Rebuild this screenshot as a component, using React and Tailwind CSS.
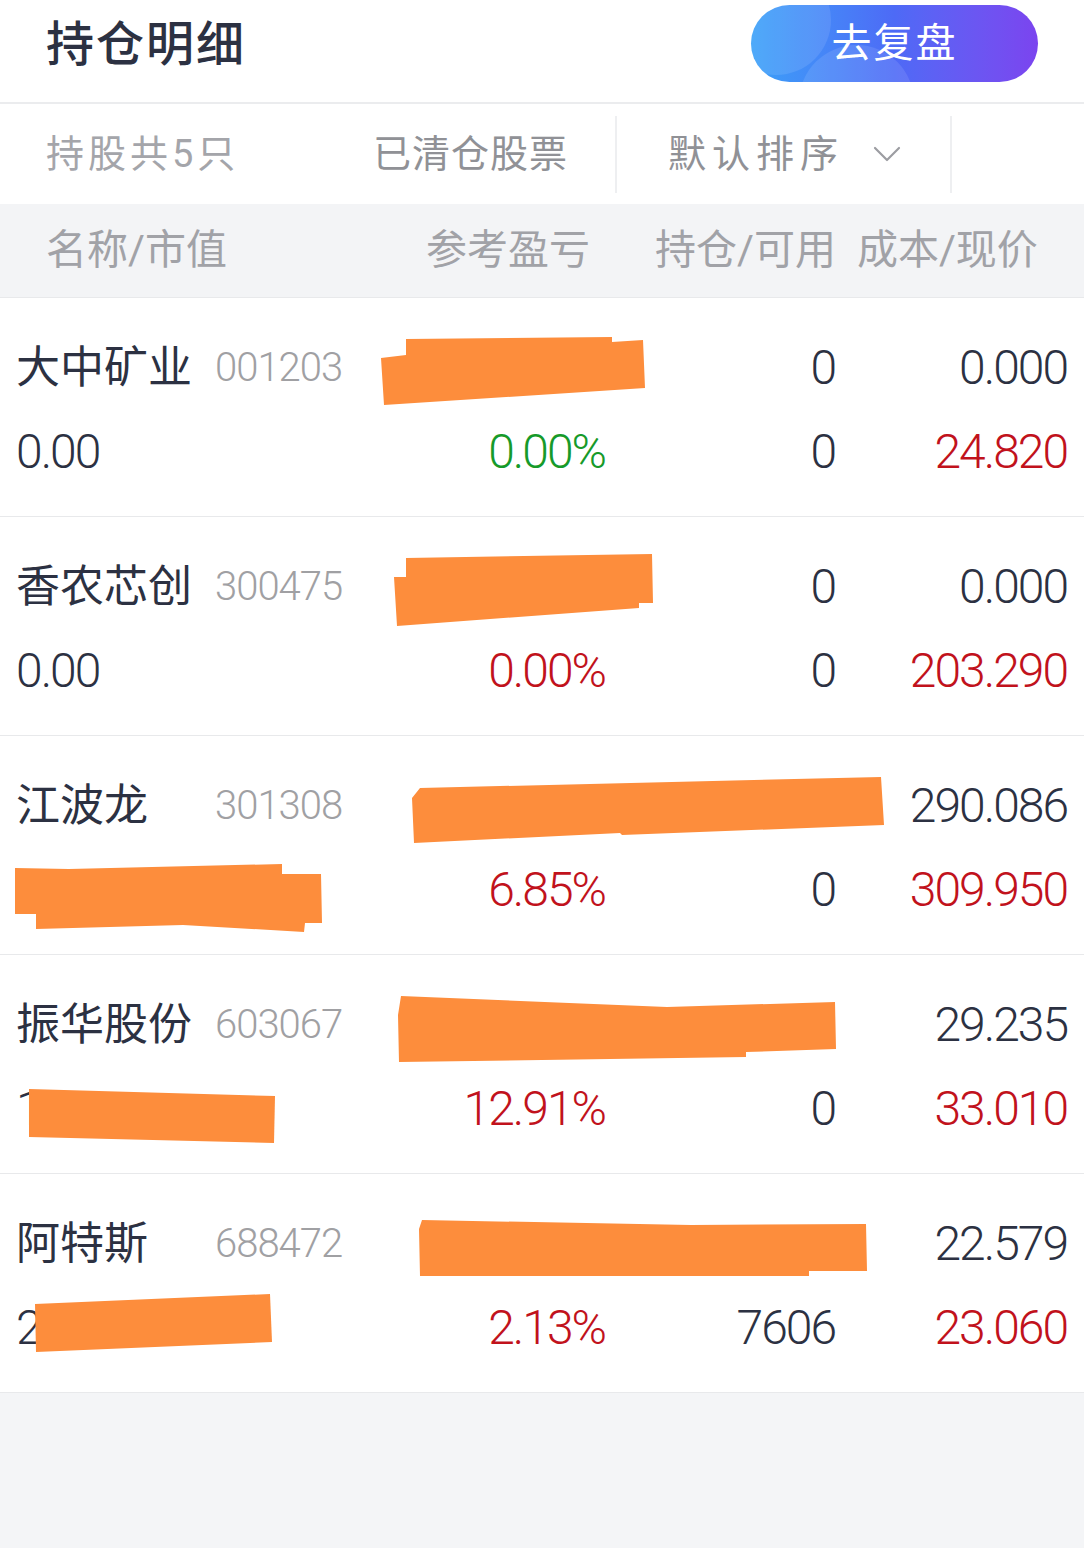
import React from 'react';

const FONT = { fontFamily: 'Roboto, "Noto Sans CJK SC", sans-serif' };

const RED = 'text-[#c1121c]';
const GREEN = 'text-[#169a2a]';
const DARK = 'text-[#2c3142]';

// 打码区域（相对每一行的坐标）
const rows = [
  {
    name: '大中矿业', code: '001203',
    r1: ['', '0', '0.000'], r1c: [DARK, DARK, DARK],
    value: '0.00', pct: '0.00%', pctColor: GREEN, avail: '0', price: '24.820',
    marks: ['381,60 406,57 406,41 612,39 612,44 643,42 645,90 384,107'],
  },
  {
    name: '香农芯创', code: '300475',
    r1: ['', '0', '0.000'], r1c: [DARK, DARK, DARK],
    value: '0.00', pct: '0.00%', pctColor: RED, avail: '0', price: '203.290',
    marks: ['394,60 406,60 406,41 652,37 653,86 639,86 639,91 397,109'],
  },
  {
    name: '江波龙', code: '301308',
    r1: ['', '', '290.086'], r1c: [RED, DARK, DARK],
    value: '', pct: '6.85%', pctColor: RED, avail: '0', price: '309.950',
    marks: [
      '412,62 420,52 881,41 884,89 622,99 620,97 414,107',
      '15,132 69,133 282,128 282,138 321,138 322,187 305,187 304,196 183,189 36,193 36,178 15,178',
    ],
  },
  {
    name: '振华股份', code: '603067',
    r1: ['', '', '29.235'], r1c: [DARK, DARK, DARK],
    value: '1', pct: '12.91%', pctColor: RED, avail: '0', price: '33.010',
    marks: [
      '401,41 667,52 835,47 836,94 746,97 746,102 399,107 398,60',
      '29,134 275,141 274,188 29,182',
    ],
  },
  {
    name: '阿特斯', code: '688472',
    r1: ['', '', '22.579'], r1c: [DARK, DARK, DARK],
    value: '2', pct: '2.13%', pctColor: RED, avail: '7606', price: '23.060',
    marks: [
      '422,46 691,51 866,50 867,97 809,97 809,102 420,102 419,55',
      '35,130 270,120 272,168 36,178',
    ],
  },
];

const Num = ({ children, className = '' }) => (
  <div className={`text-right text-[48px] font-light tracking-[-2px] leading-[84px] ${className}`}>{children}</div>
);

const Row = ({ row }) => (
  <div className="relative bg-white border-b border-[#e8e9eb] pt-[28px] pb-[22px] px-[16px] pr-[17px]">
    <div className="grid grid-cols-[344px_245px_230px_1fr]">
      <div className="flex items-center h-[84px]">
        <span className={`w-[199px] text-[44px] ${DARK}`}>{row.name}</span>
        <span className="text-[40px] font-light tracking-[-1px] text-[#a0a0a3]">{row.code}</span>
      </div>
      <Num className={row.r1c[0]}>{row.r1[0]}</Num>
      <Num className={row.r1c[1]}>{row.r1[1]}</Num>
      <Num className={row.r1c[2]}>{row.r1[2]}</Num>

      <div className={`text-[48px] font-light tracking-[-2px] leading-[84px] ${DARK}`}>{row.value}</div>
      <Num className={row.pctColor}>{row.pct}</Num>
      <Num className={DARK}>{row.avail}</Num>
      <Num className={RED}>{row.price}</Num>
    </div>
    <svg className="absolute inset-0 pointer-events-none" width="1084" height="219" viewBox="0 0 1084 219">
      {row.marks.map((p, i) => (
        <polygon key={i} points={p} fill="#fd8d3c" />
      ))}
    </svg>
  </div>
);

export default function App() {
  return (
    <div className="min-h-[1548px] bg-[#f4f5f7]" style={FONT}>
      {/* 标题栏 */}
      <div className="flex items-start justify-between h-[104px] pl-[46px] pr-[46px] bg-white border-b-2 border-[#ebecee]">
        <h1 className={`mt-[9px] leading-[72px] text-[48px] font-medium tracking-[2px] ${DARK}`}>持仓明细</h1>
        <button className="relative overflow-hidden mt-[5px] w-[287px] h-[77px] rounded-full bg-gradient-to-r from-[#3aa0f8] via-[#4d6af6] to-[#7b44ef]">
          <span className="absolute -left-[30px] -top-[40px] w-[110px] h-[110px] rounded-full bg-white/10" />
          <span className="absolute left-[48px] top-[40px] w-[115px] h-[115px] rounded-full bg-white/10" />
          <span className="relative text-[40px] tracking-[2px] text-white">去复盘</span>
        </button>
      </div>

      {/* 筛选栏 */}
      <div className="flex items-center h-[100px] bg-white">
        <div className="w-[373px] pl-[46px] text-[38px] tracking-[4px] text-[#a4a5aa]">持股共5只</div>
        <div className="w-[242px] text-[38px] tracking-[1px] text-[#909196]">已清仓股票</div>
        <div className="w-[2px] h-[77px] bg-[#eeeff1]" />
        <div className="flex items-center w-[333px] pl-[51px]">
          <span className="text-[38px] tracking-[6px] text-[#909196]">默认排序</span>
          <svg className="ml-[29px]" width="28" height="18" viewBox="0 0 28 18" fill="none">
            <polyline points="2,3 14,15 26,3" stroke="#9c9da2" strokeWidth="2.2" strokeLinecap="round" strokeLinejoin="round" />
          </svg>
        </div>
        <div className="w-[2px] h-[77px] bg-[#eeeff1]" />
      </div>

      {/* 列头 */}
      <div className="flex items-center h-[94px] bg-[#f3f4f6] border-b border-[#e8e9eb] pl-[46px] text-[41px] text-[#a1a2a7]">
        <div className="w-[314px]">名称/市值</div>
        <div className="w-[230px] text-right">参考盈亏</div>
        <div className="ml-[65px]">持仓/可用</div>
        <div className="ml-[21px]">成本/现价</div>
      </div>

      {rows.map((r) => (
        <Row key={r.code} row={r} />
      ))}
    </div>
  );
}
